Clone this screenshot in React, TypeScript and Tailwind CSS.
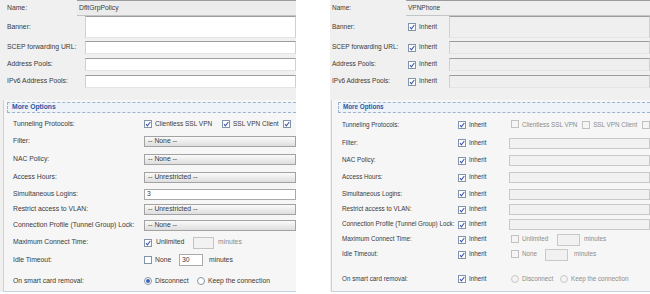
const FONT = "font-['Liberation_Sans',Arial,sans-serif]";

function Check({ on, off }: { on?: boolean; off?: boolean }) {
  return (
    <span
      className={`relative inline-block w-[8px] h-[8px] border shrink-0 ${
        off ? "border-[#c2c2c2] bg-[#f5f5f5]" : "border-[#8494a8] bg-white"
      }`}
    >
      {on && (
        <svg viewBox="0 0 8 8" className="absolute -inset-px w-[8px] h-[8px]">
          <path d="M2 4.2 L3.4 5.8 L6.3 2" stroke="#3f56b0" strokeWidth="1.1" fill="none" />
        </svg>
      )}
    </span>
  );
}

function Radio({ on, off }: { on?: boolean; off?: boolean }) {
  return (
    <span
      className={`flex items-center justify-center w-[8px] h-[8px] rounded-full border shrink-0 ${
        off ? "border-[#c8c8c8] bg-[#f3f3f3]" : "border-[#8494a8] bg-white"
      }`}
    >
      {on && <span className="w-[4px] h-[4px] rounded-full bg-[#3f63b8]" />}
    </span>
  );
}

function Select({ text, off }: { text?: string; off?: boolean }) {
  return (
    <div
      className={`flex-1 h-[11px] flex items-center pl-[3px] border ${
        off
          ? "border-[#c9c9c9] bg-[#f1f1f1]"
          : "border-[#a3a3a3] bg-gradient-to-b from-[#fafafa] to-[#dedede]"
      }`}
    >
      {text}
    </div>
  );
}

function Box({ className }: { className: string }) {
  return <div className={`border border-t-[#9c9c9c] border-x-[#d0d0d0] border-b-[#e4e4e4] ${className}`} />;
}

function TopRow({ label, labelW, h, mt, pl, children }: { label: string; labelW: string; h: string; mt?: string; pl?: string; children: React.ReactNode }) {
  return (
    <div className={`flex ${h} ${mt ?? ""}`}>
      <div className={`${labelW} ${pl ?? "pl-[7px]"} flex items-center shrink-0`}>{label}</div>
      {children}
    </div>
  );
}

function OptRow({ label, labelW, h, mt, children }: { label: string; labelW: string; h: string; mt?: string; children: React.ReactNode }) {
  return (
    <div className={`flex items-center ${h} ${mt ?? ""}`}>
      <div className={`${labelW} shrink-0`}>{label}</div>
      {children}
    </div>
  );
}

function Header() {
  return (
    <div className="h-[11px] border border-dashed border-[#9fb3cf] border-r-0 bg-[#eef3fa] flex items-center pl-[4px] font-bold text-[#2456a6]">
      More Options
    </div>
  );
}

function Inherit() {
  return (
    <div className="flex items-center gap-[3px] w-[51px] shrink-0">
      <Check on />
      <span>Inherit</span>
    </div>
  );
}

function TopInherit() {
  return (
    <div className="w-[41px] flex items-center gap-[3px] shrink-0">
      <Check on />
      <span>Inherit</span>
    </div>
  );
}

function LeftPanel() {
  const lw = "w-[131px]";
  return (
    <div className="w-[296px] h-[292px] bg-[#f0f0f0] flex flex-col shrink-0 text-[6.8px]">
      <TopRow label="Name:" labelW="w-[77px]" h="h-[16px]">
        <div className="flex-1 border-t border-b border-t-[#9c9c9c] border-b-[#c4c4c4] bg-[#ececec] flex items-center pl-[2px]">
          DfltGrpPolicy
        </div>
      </TopRow>
      <TopRow label="Banner:" labelW="w-[85px]" h="h-[22px]">
        <Box className="flex-1 bg-white" />
      </TopRow>
      <TopRow label="SCEP forwarding URL:" labelW="w-[85px]" h="h-[13px]" mt="mt-[3px]">
        <Box className="flex-1 bg-white" />
      </TopRow>
      <TopRow label="Address Pools:" labelW="w-[85px]" h="h-[13px]" mt="mt-[4px]">
        <Box className="flex-1 bg-white" />
      </TopRow>
      <TopRow label="IPv6 Address Pools:" labelW="w-[85px]" h="h-[13px]" mt="mt-[4px]">
        <Box className="flex-1 bg-white" />
      </TopRow>

      <div className="mt-[12px] ml-[3px] flex-1 border-l border-b border-[#c3d2e4] bg-[#f6f6f6] pt-[2px] pl-[3px] flex flex-col">
        <Header />
        <div className="pl-[6px] flex flex-col">
          <OptRow label="Tunneling Protocols:" labelW={lw} h="h-[18px]" mt="mt-[2px]">
            <Check on />
            <span className="ml-[3px] w-[67px] text-[6.5px]">Clientless SSL VPN</span>
            <Check on />
            <span className="ml-[3px] w-[50px] text-[6.5px]">SSL VPN Client</span>
            <Check on />
          </OptRow>
          <OptRow label="Filter:" labelW={lw} h="h-[17px]">
            <Select text="-- None --" />
          </OptRow>
          <OptRow label="NAC Policy:" labelW={lw} h="h-[18px]">
            <Select text="-- None --" />
          </OptRow>
          <OptRow label="Access Hours:" labelW={lw} h="h-[18px]">
            <Select text="-- Unrestricted --" />
          </OptRow>
          <OptRow label="Simultaneous Logins:" labelW={lw} h="h-[16px]">
            <div className="flex-1 h-[11px] border border-[#a9a9a9] bg-white flex items-center pl-[2px]">3</div>
          </OptRow>
          <OptRow label="Restrict access to VLAN:" labelW={lw} h="h-[15px]">
            <Select text="-- Unrestricted --" />
          </OptRow>
          <OptRow label="Connection Profile (Tunnel Group) Lock:" labelW={lw} h="h-[17px]">
            <Select text="-- None --" />
          </OptRow>
          <OptRow label="Maximum Connect Time:" labelW={lw} h="h-[17px]">
            <Check on />
            <span className="ml-[4px] w-[37px]">Unlimited</span>
            <div className="w-[21px] h-[12px] border border-[#c4c4c4] bg-[#f2f2f2]" />
            <span className="ml-[4px] text-[#8a8a8a]">minutes</span>
          </OptRow>
          <OptRow label="Idle Timeout:" labelW={lw} h="h-[18px]">
            <Check />
            <span className="ml-[3px] w-[24px]">None</span>
            <div className="w-[24px] h-[12px] border border-[#a9a9a9] bg-white flex items-center pl-[2px]">30</div>
            <span className="ml-[6px]">minutes</span>
          </OptRow>
          <OptRow label="On smart card removal:" labelW={lw} h="h-[20px]" mt="mt-[2px]">
            <Radio on />
            <span className="ml-[3px] w-[42px]">Disconnect</span>
            <Radio />
            <span className="ml-[3px]">Keep the connection</span>
          </OptRow>
        </div>
      </div>
    </div>
  );
}

function RightPanel() {
  const lw = "w-[116px]";
  const gray = "text-[#8c8c8c]";
  return (
    <div className="w-[320px] h-[292px] bg-[#f0f0f0] flex flex-col shrink-0 text-[6.5px]">
      <TopRow label="Name:" labelW="w-[76px]" h="h-[16px]" pl="pl-[2px]">
        <div className="flex-1 border-t border-b border-t-[#9c9c9c] border-b-[#c4c4c4] bg-[#efefef] flex items-center pl-[2px]">
          VPNPhone
        </div>
      </TopRow>
      <TopRow label="Banner:" labelW="w-[78px]" h="h-[22px]" pl="pl-[2px]">
        <TopInherit />
        <Box className="flex-1 bg-[#efefef]" />
      </TopRow>
      <TopRow label="SCEP forwarding URL:" labelW="w-[78px]" h="h-[13px]" mt="mt-[3px]" pl="pl-[2px]">
        <TopInherit />
        <Box className="flex-1 bg-[#efefef]" />
      </TopRow>
      <TopRow label="Address Pools:" labelW="w-[78px]" h="h-[13px]" mt="mt-[4px]" pl="pl-[2px]">
        <TopInherit />
        <Box className="flex-1 bg-[#efefef]" />
      </TopRow>
      <TopRow label="IPv6 Address Pools:" labelW="w-[78px]" h="h-[13px]" mt="mt-[4px]" pl="pl-[2px]">
        <TopInherit />
        <Box className="flex-1 bg-[#efefef]" />
      </TopRow>

      <div className="mt-[12px] ml-[1px] flex-1 border-l border-b border-[#c3d2e4] bg-[#f6f6f6] pt-[2px] pl-[6px] flex flex-col text-[6.3px]">
        <Header />
        <div className="pl-[4px] flex flex-col">
          <OptRow label="Tunneling Protocols:" labelW={lw} h="h-[18px]" mt="mt-[3px]">
            <Inherit />
            <span className="ml-[2px]"><Check off /></span>
            <span className={`ml-[3px] w-[64px] ${gray}`}>Clientless SSL VPN</span>
            <Check off />
            <span className={`ml-[3px] w-[52px] ${gray}`}>SSL VPN Client</span>
            <Check off />
          </OptRow>
          <OptRow label="Filter:" labelW={lw} h="h-[18px]">
            <Inherit />
            <Select off />
          </OptRow>
          <OptRow label="NAC Policy:" labelW={lw} h="h-[17px]">
            <Inherit />
            <Select off />
          </OptRow>
          <OptRow label="Access Hours:" labelW={lw} h="h-[17px]">
            <Inherit />
            <Select off />
          </OptRow>
          <OptRow label="Simultaneous Logins:" labelW={lw} h="h-[16px]">
            <Inherit />
            <Select off />
          </OptRow>
          <OptRow label="Restrict access to VLAN:" labelW={lw} h="h-[15px]">
            <Inherit />
            <Select off />
          </OptRow>
          <OptRow label="Connection Profile (Tunnel Group) Lock:" labelW={lw} h="h-[15px]">
            <Inherit />
            <Select off />
          </OptRow>
          <OptRow label="Maximum Connect Time:" labelW={lw} h="h-[15px]">
            <Inherit />
            <span className="ml-[2px]"><Check off /></span>
            <span className={`ml-[3px] w-[35px] ${gray}`}>Unlimited</span>
            <div className="w-[23px] h-[12px] border border-[#c9c9c9] bg-[#f1f1f1]" />
            <span className={`ml-[4px] ${gray}`}>minutes</span>
          </OptRow>
          <OptRow label="Idle Timeout:" labelW={lw} h="h-[15px]">
            <Inherit />
            <span className="ml-[2px]"><Check off /></span>
            <span className={`ml-[3px] w-[23px] ${gray}`}>None</span>
            <div className="w-[23px] h-[12px] border border-[#c9c9c9] bg-[#f1f1f1]" />
            <span className={`ml-[6px] ${gray}`}>minutes</span>
          </OptRow>
          <OptRow label="On smart card removal:" labelW={lw} h="h-[18px]" mt="mt-[8px]">
            <Inherit />
            <span className="ml-[2px]"><Radio off /></span>
            <span className={`ml-[3px] w-[38px] ${gray}`}>Disconnect</span>
            <Radio off />
            <span className={`ml-[3px] ${gray}`}>Keep the connection</span>
          </OptRow>
        </div>
      </div>
    </div>
  );
}

export default function App() {
  return (
    <div className={`w-[650px] h-[294px] bg-white flex overflow-hidden whitespace-nowrap leading-none text-[#3a3a3a] ${FONT}`}>
      <LeftPanel />
      <div className="w-[34px] shrink-0" />
      <RightPanel />
    </div>
  );
}
